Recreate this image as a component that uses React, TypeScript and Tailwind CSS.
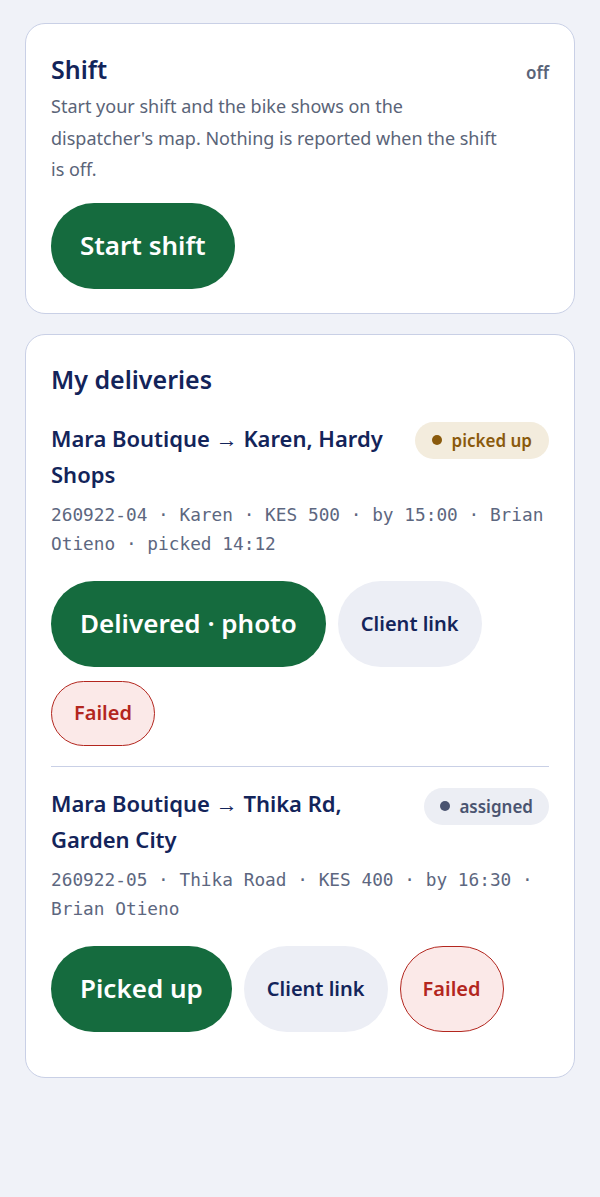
type Action = { label: string; kind: "primary" | "ghost" | "danger" };

type Delivery = {
  route: string;
  status: "picked" | "assigned";
  meta: string;
  actions: Action[];
};

const deliveries: Delivery[] = [
  {
    route: "Mara Boutique → Karen, Hardy Shops",
    status: "picked",
    meta: "260922-04 · Karen · KES 500 · by 15:00 · Brian Otieno · picked 14:12",
    actions: [
      { label: "Delivered · photo", kind: "primary" },
      { label: "Client link", kind: "ghost" },
      { label: "Failed", kind: "danger" },
    ],
  },
  {
    route: "Mara Boutique → Thika Rd, Garden City",
    status: "assigned",
    meta: "260922-05 · Thika Road · KES 400 · by 16:30 · Brian Otieno",
    actions: [
      { label: "Picked up", kind: "primary" },
      { label: "Client link", kind: "ghost" },
      { label: "Failed", kind: "danger" },
    ],
  },
];

function ActionButton({ label, kind }: Action) {
  if (kind === "primary") {
    return (
      <button className="rounded-full bg-[#156b3e] px-[29px] py-[23.5px] text-[26px] font-semibold leading-[39px] text-white">
        {label}
      </button>
    );
  }
  if (kind === "ghost") {
    return (
      <button className="rounded-full bg-[#eceef5] px-[23px] py-[17.5px] text-[20px] font-semibold leading-[30px] text-[#13245a]">
        {label}
      </button>
    );
  }
  return (
    <button className="rounded-full border border-[#b3261e] bg-[#fbe9e8] px-[22px] py-[16.5px] text-[20px] font-semibold leading-[30px] text-[#b3261e]">
      {label}
    </button>
  );
}

function StatusBadge({ status }: { status: Delivery["status"] }) {
  if (status === "picked") {
    return (
      <span className="mt-[2px] flex shrink-0 items-center gap-[10px] rounded-full bg-[#f3ecdd] px-[17px] py-[6px] text-[17px] font-semibold leading-[25px] text-[#8a5a0c]">
        <span className="h-[10px] w-[10px] rounded-full bg-[#8a5a0c]" />
        picked up
      </span>
    );
  }
  return (
    <span className="mt-[3px] flex shrink-0 items-center gap-[9px] rounded-full bg-[#eceef4] px-[16px] py-[6px] text-[17px] font-semibold leading-[25px] text-[#4a5470]">
      <span className="h-[10px] w-[10px] rounded-full bg-[#4a5470]" />
      assigned
    </span>
  );
}

export default function App() {
  return (
    <main className="min-h-screen bg-[#f0f2f8] px-[25px] py-[23px] font-['Noto_Sans',sans-serif]">
      <div className="flex flex-col gap-[20px]">

        {/* Shift card */}
        <section className="rounded-[20px] border border-[#c9d0e6] bg-white px-[25px] pt-[26px] pb-[24px]">
          <div className="flex items-start justify-between">
            <h2 className="text-[25px] font-semibold leading-[38px] text-[#13245a]">Shift</h2>
            <span className="pt-[10px] text-[17px] font-semibold text-[#5a6478]">off</span>
          </div>
          <p className="mt-[3px] max-w-[456px] text-[18px] leading-[31.5px] text-[#5a6478]">
            Start your shift and the bike shows on the dispatcher's map. Nothing is reported when the shift is off.
          </p>
          <div className="mt-[17px] flex">
            <ActionButton label="Start shift" kind="primary" />
          </div>
        </section>

        {/* Deliveries card */}
        <section className="rounded-[20px] border border-[#c9d0e6] bg-white px-[25px] pt-[25px] pb-[45px]">
          <h2 className="text-[25px] font-semibold leading-[38px] text-[#13245a]">My deliveries</h2>

          <div className="mt-[22px] flex flex-col">
            {deliveries.map((d, i) => (
              <div
                key={d.meta}
                className={i > 0 ? "mt-[20px] border-t border-[#c9d0e6] pt-[18px]" : ""}
              >
                <div className="flex items-start justify-between gap-[20px]">
                  <h3 className="text-[22px] font-semibold leading-[36px] text-[#13245a]">{d.route}</h3>
                  <StatusBadge status={d.status} />
                </div>
                <p className="mt-[8px] font-['DejaVu_Sans_Mono',monospace] text-[17.8px] leading-[29px] text-[#5d6780]">
                  {d.meta}
                </p>
                <div className="mt-[23px] flex flex-wrap gap-x-[12px] gap-y-[14px]">
                  {d.actions.map((a) => (
                    <ActionButton key={a.label} {...a} />
                  ))}
                </div>
              </div>
            ))}
          </div>
        </section>

      </div>
    </main>
  );
}
